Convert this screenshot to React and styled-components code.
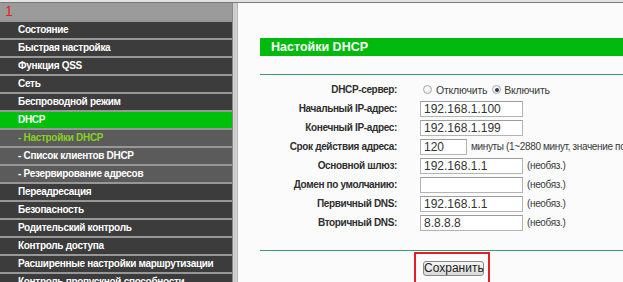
import styled, { createGlobalStyle } from 'styled-components'

const Global = createGlobalStyle`
  html, body {
    margin: 0;
    padding: 0;
    width: 623px;
    height: 282px;
    overflow: hidden;
    background: #fbfbfb;
    font-family: "Liberation Sans", Arial, sans-serif;
  }
`

const Page = styled.div`
  display: flex;
  flex-direction: column;
  width: 623px;
  height: 282px;
  overflow: hidden;
`

const TopStrip = styled.div`
  height: 2px;
  background: #e2e2e2;
  border-bottom: 1px solid #7a7a7a;
  flex-shrink: 0;
`

const Main = styled.div`
  display: flex;
  flex: 1;
  min-height: 0;
`

const Sidebar = styled.nav`
  width: 232px;
  flex-shrink: 0;
  background: #3c3c3c;
  display: flex;
  flex-direction: column;
`

const SideHeader = styled.div`
  height: 17px;
  background: #9b9b9b;
  color: #e8231f;
  font-size: 14px;
  line-height: 17px;
  padding-left: 5px;
`

const MenuItem = styled.div`
  height: 16px;
  flex-shrink: 0;
  border-top: 2px solid #979797;
  background: ${p => (p.$active ? '#00c10a' : p.$sub ? '#5b5b5b' : '#3c3c3c')};
  color: ${p => (p.$current ? '#86d11f' : '#ffffff')};
  font-size: 10px;
  font-weight: bold;
  letter-spacing: -0.3px;
  line-height: 16px;
  padding-left: 18px;
  white-space: nowrap;
  overflow: hidden;
`

const Divider = styled.div`
  width: 4px;
  flex-shrink: 0;
  background: #cfcfcf;
  border-left: 1px solid #8a8a8a;
  border-right: 1px solid #b8b8b8;
`

const Content = styled.main`
  flex: 1;
  min-width: 0;
  background: #fbfbfb;
  padding: 35px 0 0 22px;
`

const Panel = styled.section`
  width: 384px;
`

const TitleBar = styled.h2`
  margin: 0;
  height: 18px;
  background: #00bb0d;
  color: #fff;
  font-size: 12.5px;
  font-weight: bold;
  line-height: 18px;
  padding-left: 11px;
  white-space: nowrap;
`

const Rule = styled.hr`
  margin: ${p => p.$top}px 0 0;
  border: 0;
  border-top: 1px solid #3a9c6c;
  height: 0;
`

const Form = styled.div`
  display: grid;
  grid-template-columns: 137px auto;
  column-gap: 23px;
  grid-auto-rows: 19px;
  align-items: center;
  margin-top: 5px;
`

const Label = styled.label`
  text-align: right;
  color: #2e2e2e;
  font-size: 10px;
  font-weight: bold;
  letter-spacing: -0.35px;
  white-space: nowrap;
`

const Field = styled.div`
  display: flex;
  align-items: center;
  white-space: nowrap;
  color: #3a3a3a;
  font-size: 10px;
  letter-spacing: -0.35px;
`

const Input = styled.div`
  box-sizing: border-box;
  width: ${p => p.$w}px;
  height: 16px;
  border: 1px solid #b4b4b4;
  border-top-color: #9c9c9c;
  background: #fff;
  color: #333;
  font-size: 12px;
  letter-spacing: 0;
  line-height: 14px;
  padding-left: 3px;
  margin-right: ${p => (p.$w < 60 ? 4 : 4)}px;
  flex-shrink: 0;
`

const Radio = styled.span`
  box-sizing: border-box;
  width: 9px;
  height: 9px;
  border-radius: 50%;
  border: 1px solid #a9a9a9;
  background: radial-gradient(circle at 40% 35%, #ffffff, #e2e2e2);
  margin: 0 ${p => p.$gap}px 0 3px;
  display: inline-flex;
  align-items: center;
  justify-content: center;
  &::after {
    content: '';
    width: 4px;
    height: 4px;
    border-radius: 50%;
    background: ${p => (p.$checked ? '#2b3a55' : 'transparent')};
  }
`

const RadioText = styled.span`
  font-size: 10.5px;
  letter-spacing: -0.2px;
  margin-right: 2px;
`

const Actions = styled.div`
  display: flex;
  justify-content: center;
`

const Highlight = styled.div`
  border: 2px solid #e41e26;
  padding: 4px 4px 7px 7px;
  margin-top: 1px;
`

const Button = styled.button`
  height: 15px;
  width: 61px;
  padding: 0;
  border: 1px solid #8a8a8a;
  border-radius: 3px;
  background: linear-gradient(#f6f6f6, #d9d9d9);
  color: #222;
  font-family: "Liberation Sans", Arial, sans-serif;
  font-size: 12px;
  line-height: 13px;
`

const menu = [
  { t: 'Состояние' },
  { t: 'Быстрая настройка' },
  { t: 'Функция QSS' },
  { t: 'Сеть' },
  { t: 'Беспроводной режим' },
  { t: 'DHCP', active: true },
  { t: '- Настройки DHCP', sub: true, current: true },
  { t: '- Список клиентов DHCP', sub: true },
  { t: '- Резервирование адресов', sub: true },
  { t: 'Переадресация' },
  { t: 'Безопасность' },
  { t: 'Родительский контроль' },
  { t: 'Контроль доступа' },
  { t: 'Расширенные настройки маршрутизации' },
  { t: 'Контроль пропускной способности' },
]

const rows = [
  { label: 'Начальный IP-адрес:', value: '192.168.1.100', w: 103 },
  { label: 'Конечный IP-адрес:', value: '192.168.1.199', w: 103 },
  { label: 'Срок действия адреса:', value: '120', w: 47, note: 'минуты (1~2880 минут, значение по умолчанию: 120)' },
  { label: 'Основной шлюз:', value: '192.168.1.1', w: 103, note: '(необяз.)' },
  { label: 'Домен по умолчанию:', value: '', w: 103, note: '(необяз.)' },
  { label: 'Первичный DNS:', value: '192.168.1.1', w: 103, note: '(необяз.)' },
  { label: 'Вторичный DNS:', value: '8.8.8.8', w: 103, note: '(необяз.)' },
]

function FieldRow({ r }) {
  return (
    <>
      <Label>{r.label}</Label>
      <Field>
        <Input $w={r.w}>{r.value}</Input>
        {r.note}
      </Field>
    </>
  )
}

export default function App() {
  return (
    <Page>
      <Global />
      <TopStrip />
      <Main>
        <Sidebar>
          <SideHeader>1</SideHeader>
          {menu.map(m => (
            <MenuItem key={m.t} $active={m.active} $sub={m.sub} $current={m.current}>
              {m.t}
            </MenuItem>
          ))}
        </Sidebar>
        <Divider />
        <Content>
          <Panel>
            <TitleBar>Настойки DHCP</TitleBar>
            <Rule $top={18} />
            <Form>
              <Label>DHCP-сервер:</Label>
              <Field>
                <Radio $gap={4} />
                <RadioText>Отключить</RadioText>
                <Radio $gap={3} $checked />
                <RadioText>Включить</RadioText>
              </Field>
              {rows.map(r => (
                <FieldRow key={r.label} r={r} />
              ))}
            </Form>
            <Rule $top={18} />
            <Actions>
              <Highlight>
                <Button>Сохранить</Button>
              </Highlight>
            </Actions>
          </Panel>
        </Content>
      </Main>
    </Page>
  )
}
